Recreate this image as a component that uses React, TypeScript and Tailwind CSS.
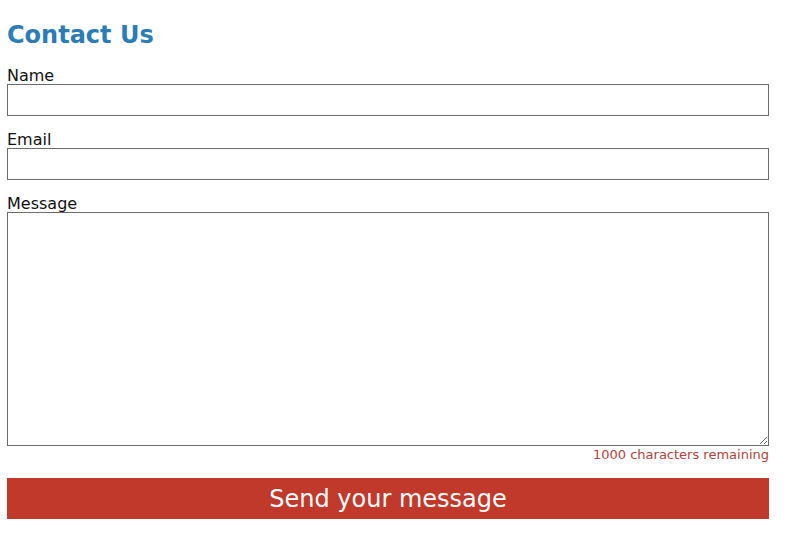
import React from "react";

export default function App() {
  const font = { fontFamily: '"DejaVu Sans", Verdana, sans-serif' };
  return (
    <div className="bg-white w-[797px] h-[540px] pl-[7px] pt-[21px]" style={font}>
      <div className="w-[762px]">
        <h1 className="text-[24px] leading-[28px] font-bold text-[#2c7cb6] mb-[19px]">Contact Us</h1>
        <label className="block text-[16px] leading-4 text-[#111]">Name</label>
        <input type="text" className="block w-full h-[32px] border border-[#6b6b6b] mb-4 outline-none" />
        <label className="block text-[16px] leading-4 text-[#111]">Email</label>
        <input type="text" className="block w-full h-[32px] border border-[#6b6b6b] mb-4 outline-none" />
        <label className="block text-[16px] leading-4 text-[#111]">Message</label>
        <textarea className="block w-full h-[234px] border border-[#6b6b6b] outline-none" />
        <div className="text-right text-[13px] leading-[15px] text-[#b0443d] mt-[1px] mb-4">1000 characters remaining</div>
        <button className="block w-full h-[41px] bg-[#c0392b] text-white text-[24px] leading-[28px]">Send your message</button>
      </div>
    </div>
  );
}
